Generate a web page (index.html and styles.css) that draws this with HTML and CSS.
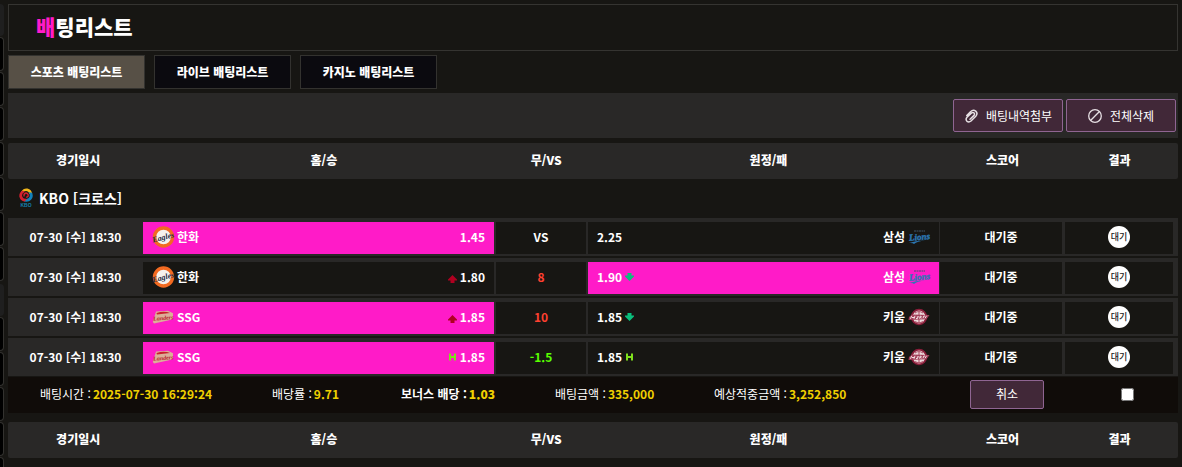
FILE: index.html
```html
<!DOCTYPE html>
<html lang="ko">
<head>
<meta charset="utf-8">
<title>배팅리스트</title>
<link rel="stylesheet" href="styles.css">
</head>
<body>
<svg class="defs" aria-hidden="true">
  <symbol id="heroes" viewBox="0 0 22 18">
    <circle cx="11" cy="9" r="7.300" fill="#eddadc" stroke="#8a1d3a" stroke-width="1.800"/>
    <path d="M7 5q3.500-3 8 0M7 13.500q4 2.800 8 0M11 2v13" fill="none" stroke="#b0566b" stroke-width="1.100"/>
    <path d="M1 9L4 6.500l17.500.5-3 4.200L.5 12z" fill="#a3405a"/>
    <path d="M2.500 10.800l1.200-3M4 9.500h2M6 10.800l1-3M8 10.500h1.500l.8-2.500M8.800 9h1M11.500 10.600l.8-2.600 1.200.8-1.200.6.900 1.200M15 10.300l.8-2.300h1.200M17 10.300l1.500-2.500" stroke="#fbeff0" stroke-width=".9" fill="none"/>
  </symbol>
  <symbol id="up" viewBox="0 0 9 8"><path d="M4.500 0L9 4.500V5.500H6.500V8h-4V5.500H0V4.500z" fill="#b00020"/></symbol>
  <symbol id="down" viewBox="0 0 9 8"><path d="M4.500 8L9 3.500V2.500H6.500V0h-4v2.500H0v1z" fill="#0abf7c"/></symbol>
  <symbol id="handi" viewBox="0 0 9 8"><path d="M2 .5v7M7 .5v7M1 4h7" stroke="#7fe01c" stroke-width="2" fill="none"/></symbol>
</svg>

<div class="page">
  <aside class="rail">
    <span class="rail-head"></span>
    <span class="rail-item"></span><span class="rail-item"></span><span class="rail-item"></span><span class="rail-item"></span><span class="rail-item"></span><span class="rail-item"></span><span class="rail-item"></span>
    <span class="rail-head rail-next"></span>
    <span class="rail-item"></span><span class="rail-item"></span><span class="rail-item"></span><span class="rail-item"></span><span class="rail-item"></span>
  </aside>

  <main class="content">
    <h1 class="title"><span class="accent">배</span>팅리스트</h1>

    <nav class="tabs">
      <button class="tab active" type="button">스포츠 배팅리스트</button>
      <button class="tab" type="button">라이브 배팅리스트</button>
      <button class="tab" type="button">카지노 배팅리스트</button>
    </nav>

    <div class="toolbar">
      <button class="action" type="button">
        <svg class="action-icon" viewBox="0 0 14 14"><path d="M2.800 6.500L6.500 2.700Q9.200.200 11.700 2.100 14.200 4.500 11.800 7.200L7 12Q5 13.700 3 12.300 1.200 10.300 3 8.300L7.600 3.900Q9 3 10.100 4 11 5.200 10 6.400L6 10.300" fill="none" stroke="#e6dfe3" stroke-width="1.500" stroke-linecap="round"/></svg>
        배팅내역첨부
      </button>
      <button class="action" type="button">
        <svg class="action-icon" viewBox="0 0 14 14"><circle cx="7" cy="7" r="6.300" fill="none" stroke="#e6dfe3" stroke-width="1.300"/><path d="M2.800 11.200l8.400-8.400" stroke="#e6dfe3" stroke-width="1.300"/></svg>
        전체삭제
      </button>
    </div>

    <table class="slip">
      <thead>
        <tr class="head"><th>경기일시</th><th>홈/승</th><th>무/VS</th><th>원정/패</th><th>스코어</th><th>결과</th></tr>
      </thead>
      <tbody>
        <tr class="league"><th colspan="6">
          <svg class="kbo" viewBox="0 0 14 19">
            <path d="M2 4Q4.500 0 8.500.6 12.500 1.600 13 5.500L10.500 6Q9.500 3 7 3 4.500 3 3 5z" fill="#f2b71b"/>
            <path d="M13.300 5Q15 10.500 10 13.300 6 14.500 4 12.500L6 10.800q3.500.6 4.700-2Q11.300 6.500 10 4z" fill="#1282bb"/>
            <path d="M4 2.500Q0 4 .3 8.500 1.500 13 5.500 13.500L8 11Q3.500 11 3 7.500 3 5 5.500 4z" fill="#d5202f"/>
            <path d="M5 8.500Q4.500 5.500 7 5q2.500.5 2.200 3Q8.500 9.500 7 9" fill="none" stroke="#d5202f" stroke-width="1.300"/>
            <text class="kbo-name" x="7" y="18.500">KBO</text>
          </svg>KBO [크로스]</th></tr>
        <tr class="game">
          <td class="date">07-30 [수] 18:30</td>
          <td class="side picked"><span class="team"><svg class="round" viewBox="0 0 22 22"><circle cx="11.500" cy="11" r="9" fill="#f6f2ee" stroke="#f26a21" stroke-width="3.400"/><text class="script navy" x="0" y="14" transform="rotate(-14 11 11)">Eagles</text></svg>한화</span><span class="odds">1.45</span></td>
          <td class="mid">VS</td>
          <td class="side away"><span class="odds">2.25</span><span class="team">삼성<svg class="round" viewBox="0 0 22 22"><path d="M6 5h11" stroke="#41566b" stroke-width="1" stroke-dasharray="2 .5"/><text class="script blue" x="1" y="14" transform="rotate(-5 11 11)">Lions</text><path d="M1 17q7-2.800 16-2.600-8 .9-11 3.600-1-1.400-5-1z" fill="#2c78b4"/></svg></span></td>
          <td class="score">대기중</td>
          <td class="result"><span class="badge">대기</span></td>
        </tr>
        <tr class="game">
          <td class="date">07-30 [수] 18:30</td>
          <td class="side"><span class="team"><svg class="round" viewBox="0 0 22 22"><circle cx="11.500" cy="11" r="9" fill="#f6f2ee" stroke="#f26a21" stroke-width="3.400"/><text class="script navy" x="0" y="14" transform="rotate(-14 11 11)">Eagles</text></svg>한화</span><span class="odds"><svg class="mark low"><use href="#up"/></svg>1.80</span></td>
          <td class="mid over">8</td>
          <td class="side away picked"><span class="odds">1.90<svg class="mark"><use href="#down"/></svg></span><span class="team">삼성<svg class="round" viewBox="0 0 22 22"><path d="M6 5h11" stroke="#41566b" stroke-width="1" stroke-dasharray="2 .5"/><text class="script blue" x="1" y="14" transform="rotate(-5 11 11)">Lions</text><path d="M1 17q7-2.800 16-2.600-8 .9-11 3.600-1-1.400-5-1z" fill="#2c78b4"/></svg></span></td>
          <td class="score">대기중</td>
          <td class="result"><span class="badge">대기</span></td>
        </tr>
        <tr class="game">
          <td class="date">07-30 [수] 18:30</td>
          <td class="side picked"><span class="team"><svg class="round" viewBox="0 0 22 22"><path d="M4 5.500L16 4.800l5 2.400v5.500l-4 1.500-15 3.300L.8 16z" fill="#dcae98"/><path d="M4.500 7Q12 4.500 18 7l-13 1.500z" fill="#c8202c"/><text class="script red" x="1" y="14" transform="rotate(-4 11 11)">Landers</text></svg>SSG</span><span class="odds"><svg class="mark low"><use href="#up"/></svg>1.85</span></td>
          <td class="mid over">10</td>
          <td class="side away"><span class="odds">1.85<svg class="mark"><use href="#down"/></svg></span><span class="team">키움<svg class="round"><use href="#heroes"/></svg></span></td>
          <td class="score">대기중</td>
          <td class="result"><span class="badge">대기</span></td>
        </tr>
        <tr class="game">
          <td class="date">07-30 [수] 18:30</td>
          <td class="side picked"><span class="team"><svg class="round" viewBox="0 0 22 22"><path d="M4 5.500L16 4.800l5 2.400v5.500l-4 1.500-15 3.300L.8 16z" fill="#dcae98"/><path d="M4.500 7Q12 4.500 18 7l-13 1.500z" fill="#c8202c"/><text class="script red" x="1" y="14" transform="rotate(-4 11 11)">Landers</text></svg>SSG</span><span class="odds"><svg class="mark"><use href="#handi"/></svg>1.85</span></td>
          <td class="mid handicap">-1.5</td>
          <td class="side away"><span class="odds">1.85<svg class="mark"><use href="#handi"/></svg></span><span class="team">키움<svg class="round"><use href="#heroes"/></svg></span></td>
          <td class="score">대기중</td>
          <td class="result"><span class="badge">대기</span></td>
        </tr>
        <tr class="summary">
          <td>배팅시간 : <b>2025-07-30 16:29:24</b></td>
          <td>배당률 : <b>9.71</b></td>
          <td class="bonus">보너스 배당 : <b>1.03</b></td>
          <td>배팅금액 : <b>335,000</b></td>
          <td>예상적중금액 : <b>3,252,850</b></td>
          <td><button class="cancel" type="button">취소</button></td>
          <td><input class="check" type="checkbox" aria-label="배팅 선택"></td>
        </tr>
      </tbody>
    </table>

    <table class="slip next">
      <thead>
        <tr class="head"><th>경기일시</th><th>홈/승</th><th>무/VS</th><th>원정/패</th><th>스코어</th><th>결과</th></tr>
      </thead>
    </table>
  </main>
</div>
</body>
</html>
```
FILE: styles.css
```css
* { box-sizing: border-box; }

body {
  margin: 0;
  background: #171613;
  color: #fff;
  font-family: "Noto Sans CJK KR", sans-serif;
  font-size: 12px;
  line-height: 18px;
}

button { font: inherit; color: inherit; cursor: pointer; }

.defs { display: none; }

/* Logo lettering */
.script {
  font-family: "Liberation Serif", serif;
  font-size: 8px;
  font-style: italic;
  font-weight: 700;
}
.navy { fill: #1d2b46; }
.red { fill: #b71c2d; font-size: 6px; }
.blue { fill: #2c78b4; stroke: #2c78b4; font-size: 9px; stroke-width: .4px; }
.kbo-name {
  fill: #1580b0;
  font-family: "Liberation Sans", sans-serif;
  font-size: 5px;
  font-weight: 700;
  text-anchor: middle;
}

.page {
  display: flex;
  height: 100vh;
  overflow: hidden;
}

.rail {
  display: flex;
  flex-direction: column;
  gap: 1px;
  flex: 0 0 4px;
  padding-top: 4px;
  overflow: hidden;
}
.rail-item {
  flex: 0 0 34px;
  border: 1px solid #33322f;
  border-left: 0;
  border-radius: 0 4px 4px 0;
  background: #000;
}
.rail-head {
  flex: 0 0 32px;
  border-radius: 0 4px 4px 0;
  background: #1f1f1f;
}
.rail-next { margin-top: 2px; }

.content {
  flex: 1;
  min-width: 0;
  padding: 4px;
}

.title {
  margin: 0 0 4px;
  padding: 6px 27px 9px;
  border: 1px solid #353431;
  font-size: 21px;
  font-weight: 900;
  line-height: 30px;
}
.accent { color: #ff1bc8; }

.tabs {
  display: flex;
  gap: 9px;
  margin-bottom: 4px;
}
.tab {
  width: 137px;
  height: 34px;
  padding: 0;
  border: 1px solid #33322f;
  background: #0b0a0f;
  font-weight: 900;
}
.tab.active { background: #575046; }

.toolbar {
  display: flex;
  justify-content: flex-end;
  gap: 3px;
  margin-bottom: 5px;
  padding: 6px 2px;
  background: #292827;
}
.action {
  display: flex;
  align-items: center;
  justify-content: center;
  gap: 8px;
  width: 110px;
  height: 33px;
  padding: 0;
  border: 1px solid #8f6592;
  border-radius: 2px;
  background: #412838;
}
.action-icon { width: 14px; height: 14px; }

.slip, .slip thead, .slip tbody { display: block; }
.slip th, .slip td { padding: 0; }
.next { margin-top: 9px; }

.head {
  display: grid;
  grid-template-columns: 12fr 30fr 8fr 30fr 10fr 10fr;
  padding: 8px 0 10px;
  border-radius: 2px;
  background: #292827;
}
.head th { font-weight: 900; }

.league { display: block; }
.slip .league th {
  display: flex;
  align-items: center;
  gap: 6px;
  height: 39px;
  padding: 0 0 2px 11px;
  font-size: 14px;
}
.kbo { width: 14px; height: 19px; overflow: visible; }

.game {
  display: grid;
  grid-template-columns: 135fr 353fr 92fr 352fr 125fr 108fr;
  margin-bottom: 2px;
  padding: 4px 5px 2px 0;
  background: #292827;
  font-weight: 700;
}
.game:nth-last-child(2) { margin-bottom: 1px; }
.slip .game td {
  display: flex;
  align-items: center;
  justify-content: center;
  height: 32px;
  padding-bottom: 2px;
  border: 0 solid #292827;
  background: #171613;
}
.slip .game .date { background: none; }
.slip .game .side {
  justify-content: space-between;
  padding: 0 9px 2px;
  border-right-width: 2px;
}
.slip .game .side.away { border-right-width: 1px; }
.slip .game .picked { background: #ff1bc8; background-clip: padding-box; }
.slip .game .mid { border-right-width: 2px; }
.slip .game .score { border-right-width: 3px; }
.game .over { color: #ff4030; }
.game .handicap { color: #59ff00; }

.team, .odds {
  display: flex;
  align-items: center;
  gap: 3px;
}
.round { width: 22px; height: 22px; overflow: visible; }
.mark { width: 9px; height: 8px; }
.low { margin-top: 4px; }

.badge {
  width: 22px;
  height: 22px;
  border-radius: 50%;
  background: #fff;
  color: #222;
  font-size: 9px;
  font-weight: 500;
  line-height: 22px;
  text-align: center;
}

.summary {
  display: grid;
  grid-template-columns: 232fr 129fr 154fr 159fr 256fr 151fr 57fr;
  align-items: center;
  height: 36px;
  padding: 0 0 2px 32px;
  background: #100c09;
  white-space: nowrap;
}
.summary b { color: #f0d000; }
.summary .bonus { font-weight: 700; }
.summary td { display: flex; align-items: center; gap: 2px; }
.cancel {
  width: 74px;
  height: 29px;
  padding: 0;
  border: 1px solid #8f6592;
  border-radius: 2px;
  background: #412838;
}
.check { width: 13px; height: 13px; margin: 0; }
```
